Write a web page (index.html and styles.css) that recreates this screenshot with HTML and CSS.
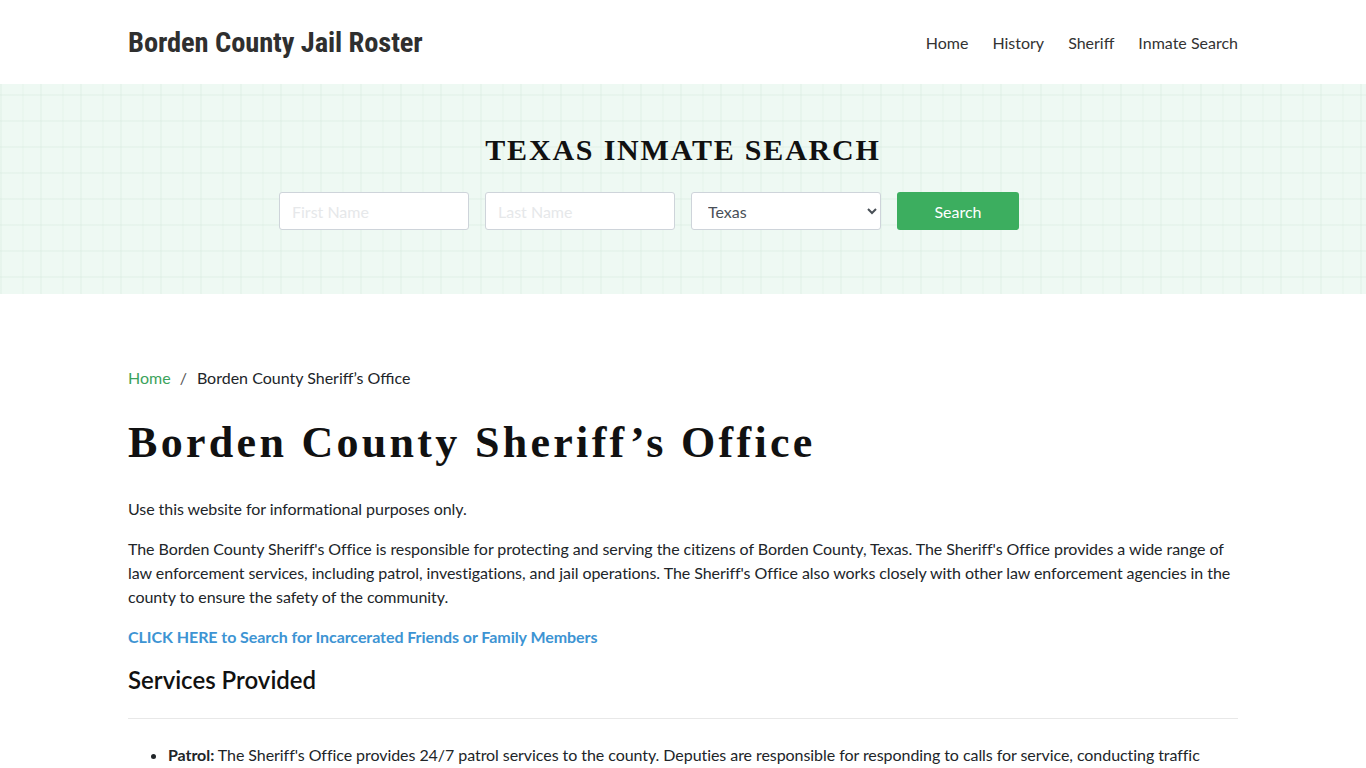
FILE: index.html
```html
<!DOCTYPE html>
<html lang="en">
<head>
<meta charset="utf-8">
<title>Borden County Sheriff's Office</title>
<link rel="stylesheet" href="styles.css">
</head>
<body>
<header class="site-header">
  <div class="container header-row">
    <a class="brand" href="#">Borden County Jail Roster</a>
    <nav class="main-nav">
      <a href="#">Home</a>
      <a href="#">History</a>
      <a href="#">Sheriff</a>
      <a href="#">Inmate Search</a>
    </nav>
  </div>
</header>

<section class="hero">
  <h2 class="hero-title">TEXAS INMATE SEARCH</h2>
  <form class="search-form">
    <input class="field" type="text" placeholder="First Name">
    <input class="field" type="text" placeholder="Last Name">
    <select class="field select">
      <option>Texas</option>
    </select>
    <button class="btn-search" type="button">Search</button>
  </form>
</section>

<main class="container content">
  <nav class="breadcrumb">
    <a href="#">Home</a>
    <span class="sep">/</span>
    <span>Borden County Sheriff’s Office</span>
  </nav>
  <h1 class="page-title">Borden County Sheriff’s Office</h1>
  <p>Use this website for informational purposes only.</p>
  <p>The Borden County Sheriff's Office is responsible for protecting and serving the citizens of Borden County, Texas. The Sheriff's Office provides a wide range of law enforcement services, including patrol, investigations, and jail operations. The Sheriff's Office also works closely with other law enforcement agencies in the county to ensure the safety of the community.</p>
  <p><a class="cta" href="#">CLICK HERE to Search for Incarcerated Friends or Family Members</a></p>
  <h3 class="section-title">Services Provided</h3>
  <hr class="rule">
  <ul class="services">
    <li><strong>Patrol:</strong> The Sheriff's Office provides 24/7 patrol services to the county. Deputies are responsible for responding to calls for service, conducting traffic stops, and investigating crimes.</li>
  </ul>
</main>
</body>
</html>
```

FILE: styles.css
```css
* { box-sizing: border-box; }

html, body {
  margin: 0;
  padding: 0;
}

body {
  font-family: Lato, "Open Sans", sans-serif;
  font-size: 16px;
  line-height: 24px;
  color: #212529;
  background: #fff;
}

a { text-decoration: none; }

.container {
  width: 1110px;
  margin: 0 auto;
}

/* Header */
.site-header {
  height: 84px;
  background: #fff;
}

.header-row {
  height: 84px;
  display: flex;
  align-items: center;
  justify-content: space-between;
}

.brand {
  font-family: "Liberation Sans Narrow", "Roboto", sans-serif;
  font-stretch: condensed;
  font-weight: 700;
  font-size: 28.5px;
  color: #2f2f2f;
  letter-spacing: -0.1px;
  margin-top: 2px;
}

.main-nav {
  display: flex;
  gap: 24px;
  margin-top: 2px;
}

.main-nav a {
  color: #333;
  font-size: 16px;
}

/* Hero search band: pale mint with a faint tile grid */
.hero {
  height: 210px;
  padding-top: 48px;
  background-color: #eef9f3;
  background-image:
    linear-gradient(90deg, rgba(205, 228, 214, 0.2) 2px, transparent 2px),
    linear-gradient(90deg, rgba(205, 228, 214, 0.12) 2px, transparent 2px),
    linear-gradient(0deg, rgba(205, 228, 214, 0.2) 2px, transparent 2px);
  background-size: 40px 100%, 40px 100%, 100% 26px;
  background-position: 0 0, 22px 0, 0 12px;
  text-align: center;
}

.hero-title {
  margin: 0 0 24px;
  font-family: "Liberation Serif", "DejaVu Serif", serif;
  font-weight: 700;
  font-size: 30px;
  line-height: 36px;
  letter-spacing: 1.8px;
  color: #111;
}

.search-form {
  width: 808px;
  margin: 0 auto;
  display: flex;
  justify-content: flex-start;
  gap: 16px;
}

.field {
  width: 190px;
  height: 38px;
  border: 1px solid #ced4da;
  border-radius: 3px;
  background: #fff;
  padding: 0 12px;
  font-family: Lato, sans-serif;
  font-size: 16px;
  color: #495057;
}

.field::placeholder { color: #e6e8ea; }

.select {
  padding-left: 12px;
  padding-right: 6px;
}

.btn-search {
  width: 122px;
  height: 38px;
  border: none;
  border-radius: 3px;
  background: #3cae5f;
  color: #fff;
  font-family: Lato, sans-serif;
  font-size: 16px;
}

/* Main content */
.content {
  padding-top: 72px;
}

.breadcrumb {
  display: flex;
  align-items: center;
  color: #212529;
}

.breadcrumb a { color: #3ba35c; }

.breadcrumb .sep {
  padding: 0 10px 0 9px;
  color: #555;
}

.page-title {
  margin: 26px 0 27px;
  font-family: "Liberation Serif", "DejaVu Serif", serif;
  font-weight: 700;
  font-size: 44px;
  line-height: 54px;
  letter-spacing: 3.3px;
  color: #111;
}

.content p {
  margin: 0 0 16px;
  letter-spacing: -0.06px;
}

.cta {
  color: #3d94d3;
  font-weight: 700;
}

.section-title {
  margin: 16px 0 0;
  font-family: Lato, sans-serif;
  font-weight: 600;
  font-size: 24px;
  line-height: 30px;
  color: #111;
}

.rule {
  margin: 23px 0 0;
  border: 0;
  border-top: 1px solid #e8e8e8;
}

.services {
  margin: 24px 0 0;
  padding-left: 40px;
  letter-spacing: -0.06px;
}

.services li { margin-bottom: 8px; }
```
